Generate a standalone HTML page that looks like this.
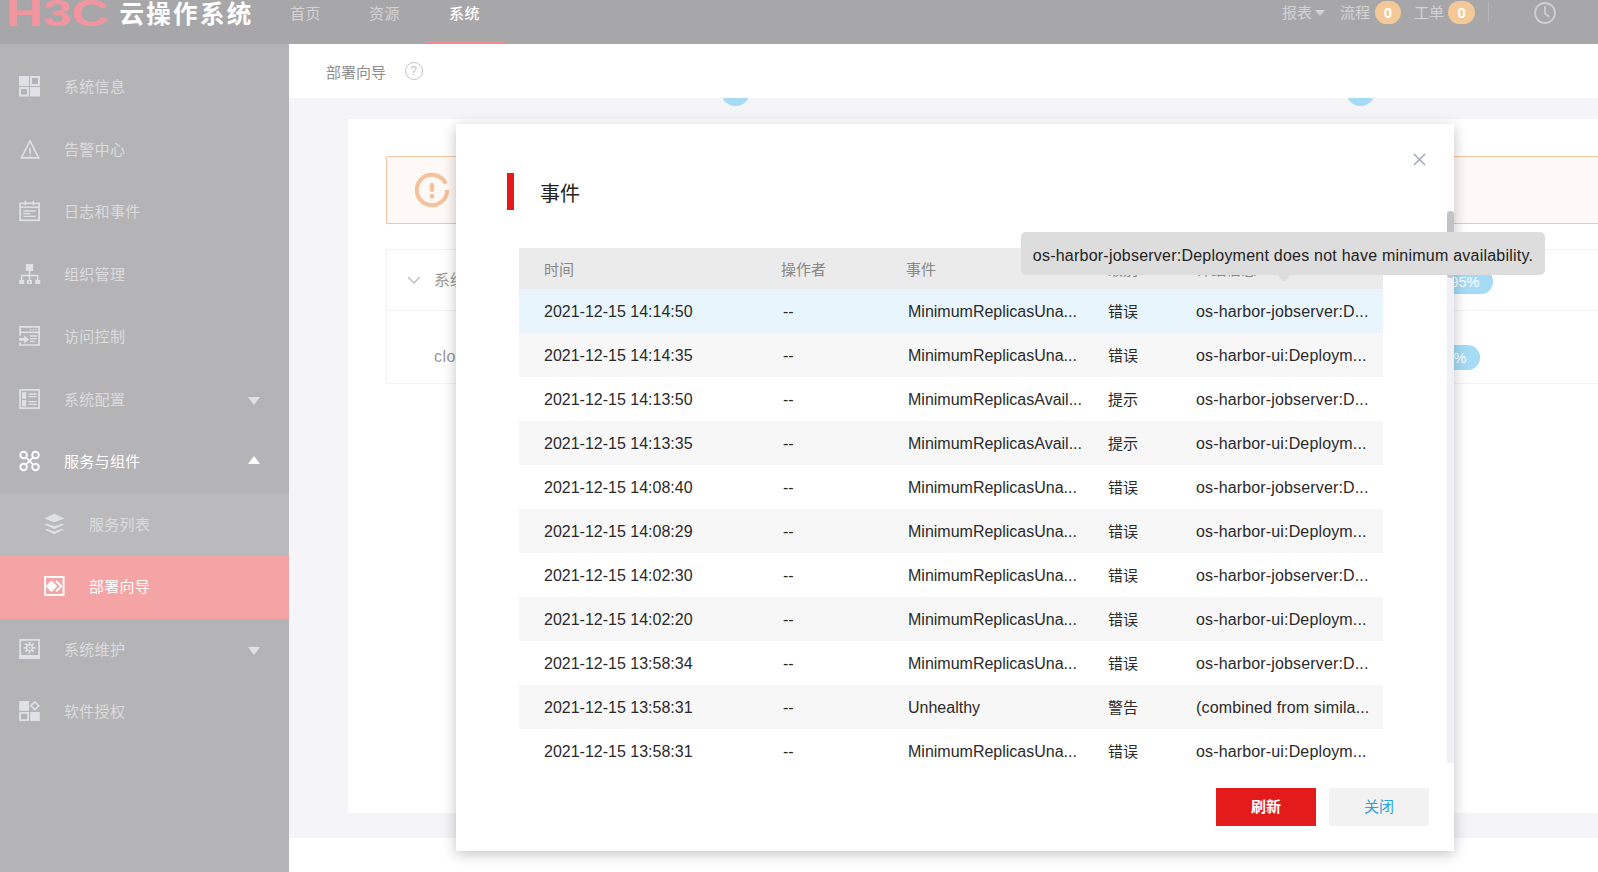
<!DOCTYPE html>
<html lang="zh-CN">
<head>
<meta charset="utf-8">
<title>云操作系统 - 部署向导</title>
<style>
*{box-sizing:border-box;margin:0;padding:0}
html,body{width:1598px;height:872px;overflow:hidden;background:#fff}
body{font-family:"Liberation Sans","Noto Sans CJK SC",sans-serif;font-size:15px;color:#222;position:relative}
.abs{position:absolute}

/* ---------- top header ---------- */
#hdr{position:absolute;left:0;top:0;width:1598px;height:44px;background:#a7a7a9;z-index:5}
#hdr .logo{position:absolute;left:0;top:0;width:112px;height:30px}
#hdr .brand{position:absolute;left:119.500px;top:-4px;font-size:24.500px;line-height:38px;font-weight:700;color:#fff;letter-spacing:2.300px;white-space:nowrap}
#hdr .nav{position:absolute;top:1.500px;letter-spacing:.5px;height:43px;font-size:15px;line-height:24px;color:#d3d3d4;white-space:nowrap}
#hdr .nav.on{color:#fff;font-weight:500}
#hdr .ul{position:absolute;left:425px;top:41px;width:80px;height:2px;background:#f08c8e}
#hdr .rt{position:absolute;top:1px;font-size:15px;line-height:24px;color:#d3d3d4;white-space:nowrap}
#hdr .bdg{position:absolute;top:1px;height:23px;width:26.500px;border-radius:11.500px;background:#f4c997;color:#fff;font-size:15px;font-weight:700;line-height:23px;text-align:center}
#hdr .sep{position:absolute;left:1488px;top:2px;width:1px;height:20px;background:#b7b7b9}

/* ---------- sidebar ---------- */
#side{position:absolute;left:0;top:44px;width:289px;height:828px;background:#b4b4b6;z-index:4}
#side .it{position:absolute;left:0;width:289px;height:62.5px;color:#dcdcde;font-size:15px;line-height:62.5px;white-space:nowrap}
#side .it .tx{position:absolute;left:64px;top:1px;letter-spacing:.3px}
#side .it.sub .tx{left:89px}
#side .ico{position:absolute;left:0;top:0;width:289px;height:828px}
#side .it.w{color:#fff}
#side .subbg{position:absolute;left:0;top:450px;width:289px;height:62px;background:#bababc}
#side .act{position:absolute;left:0;top:512px;width:289px;height:63px;background:#f5a4a5}
#side .tri{position:absolute;left:247.600px;width:0;height:0;border-left:6.800px solid transparent;border-right:6.800px solid transparent}
#side .tri.dn{border-top:8px solid #dfe1e6}
#side .tri.up{border-bottom:8px solid #fff}

/* ---------- content ---------- */
#main{position:absolute;left:289px;top:44px;width:1309px;height:828px;background:#fff;z-index:1}
#crumb{position:absolute;left:0;top:0;width:1309px;height:54px;background:#fff;z-index:3}
#crumb .t{position:absolute;left:37px;top:17px;font-size:15px;line-height:24px;color:#8e8e8e}
#crumb .q{position:absolute;left:115.500px;top:18px;width:18px;height:18px;border:1px solid #c4c4c6;border-radius:50%;color:#c0c0c2;font-size:12px;line-height:16px;text-align:center}
#gray{position:absolute;left:0;top:54px;width:1309px;height:740px;background:#f5f5f8;z-index:1}
.dot{position:absolute;top:33px;width:29px;height:29px;border-radius:50%;background:#a5dbf5;z-index:2}
#card{position:absolute;left:59px;top:75px;width:1250px;height:694px;background:#fff;z-index:2}
#alert{position:absolute;left:38px;top:37px;width:1230px;height:68px;border:1px solid #f6c4a2;border-radius:1px;background:#fef9f6}
#alert svg{position:absolute;left:25.300px;top:12.700px;width:40px;height:40px}
#sect{position:absolute;left:38px;top:130px;width:1230px;height:135px;border:1px solid #f2f2f5;background:#fff}
#sect .ln{position:absolute;left:0;top:60px;width:1230px;height:1px;background:#f2f2f5}
#sect .t1{position:absolute;left:47px;top:18.500px;font-size:16px;line-height:24px;color:#999;white-space:nowrap}
#sect .t2{position:absolute;left:47px;top:94.500px;font-size:16px;line-height:24px;color:#999;white-space:nowrap;letter-spacing:.5px}
#sect svg{position:absolute;left:20px;top:25px;width:14px;height:10px}
.pill{position:absolute;height:24.600px;border-radius:12.300px;background:#a5dbf5;color:#fff;font-size:14.500px;line-height:26.500px;text-align:right;padding-right:13.600px}

/* ---------- modal ---------- */
#modal{position:absolute;left:456px;top:124px;width:998px;height:727px;background:#fff;z-index:10;box-shadow:0 3px 13px rgba(0,0,0,.24)}
#modal .bar{position:absolute;left:51px;top:49px;width:7px;height:37px;background:#e31b1b}
#modal .ttl{position:absolute;left:84px;top:53.500px;font-size:20px;line-height:32px;color:#222}
#modal .x{position:absolute;left:957px;top:29.300px;width:13px;height:13px}
#tbl{position:absolute;left:63px;top:124px;width:864px}
#tbl .r{position:relative;width:864px;height:44px;line-height:45.600px;font-size:16px;color:#2a2a2a;white-space:nowrap}
#tbl .r.h{height:41px;line-height:44.500px;background:#ebebeb;color:#888;font-size:15px}
#tbl .r.a{background:#e9f5fd}
#tbl .r.e{background:#f7f7f7}
#tbl .r span{position:absolute;top:0}
#tbl .c4{font-size:15px}
#tbl .c5{letter-spacing:.15px}
#tbl .c1{left:25px}#tbl .c2{left:264px}#tbl .c3{left:389px}#tbl .c4{left:589px}#tbl .c5{left:677px}
#tbl .r.h .c2{left:262px}#tbl .r.h .c3{left:387px}
#sbt{position:absolute;left:991px;top:87px;width:7px;height:552px;background:#f0f0f6}
#sbh{position:absolute;left:991px;top:87px;width:7px;height:66.500px;background:#c1c3c8;border-radius:3.500px}
.btn{position:absolute;top:664px;width:100px;height:38px;font-size:15px;line-height:38px;text-align:center}
#b1{left:760px;background:#e31b1b;color:#fff;font-weight:700}
#b2{left:873px;background:#f2f2f2;color:#2d9fe0}

/* ---------- tooltip ---------- */
#tip{position:absolute;left:1021px;top:232px;width:524px;height:42.500px;border-radius:5px;background:#dddddd;z-index:20;font-size:16px;line-height:47px;letter-spacing:.23px;color:#222;text-align:center;white-space:nowrap}
#tip i{position:absolute;left:255.500px;top:42.500px;width:0;height:0;border-left:7px solid transparent;border-right:7px solid transparent;border-top:7px solid #dddddd}
</style>
</head>
<body>

<!-- top header -->
<div id="hdr">
  <svg class="logo" viewBox="0 0 112 30"><text x="5.500" y="25.700" font-family="Liberation Sans, sans-serif" font-size="36.500" font-weight="700" fill="#f2959f" textLength="103" lengthAdjust="spacingAndGlyphs">H3C</text></svg>
  <div class="brand">云操作系统</div>
  <div class="nav" style="left:290px">首页</div>
  <div class="nav" style="left:369px">资源</div>
  <div class="nav on" style="left:449px">系统</div>
  <div class="ul"></div>
  <div class="rt" style="left:1282px">报表</div>
  <div class="abs" style="left:1315px;top:10px;width:0;height:0;border-left:5px solid transparent;border-right:5px solid transparent;border-top:6px solid #d3d3d4"></div>
  <div class="rt" style="left:1340px">流程</div>
  <div class="bdg" style="left:1374.700px">0</div>
  <div class="rt" style="left:1414px">工单</div>
  <div class="bdg" style="left:1448.300px">0</div>
  <div class="sep"></div>
  <svg class="abs" style="left:1533.400px;top:0.800px;width:24px;height:24px" viewBox="0 0 24 24" fill="none" stroke="#cfcfd1" stroke-width="1.8"><circle cx="12" cy="12" r="10"/><path d="M12 6v6.5l4 3" stroke-linecap="round"/></svg>
</div>

<!-- sidebar -->
<div id="side">
  <div class="subbg"></div>
  <div class="act"></div>
  <svg class="ico" viewBox="0 44 289 828" width="289" height="828">
    <g fill="#dfe1e6" stroke="none">
      <!-- system info: four tiles -->
      <rect x="19" y="76" width="10" height="10"/>
      <rect x="30" y="87" width="10" height="9.5"/>
      <path fill-rule="evenodd" d="M30 76h10v10h-10zM32 78v6h6v-6z"/>
      <path fill-rule="evenodd" d="M19 87h10v9.500h-10zM21 89v5.500h6v-5.500z"/>
      <!-- organisation -->
      <rect x="25.800" y="264" width="7.400" height="7"/>
      <rect x="19.200" y="280" width="5" height="4"/>
      <rect x="35.200" y="280" width="5" height="4"/>
      <path fill-rule="evenodd" d="M27 280h5v4h-5zM28.800 281.200v1.800h1.400v-1.800z"/>
      <!-- config blocks -->
      <rect x="22" y="392.200" width="4.200" height="6.600"/>
      <rect x="22" y="400" width="4.200" height="6.400"/>
      <!-- layers (sub item) -->
      <path d="M54.300 513.800L64.600 518.400L54.300 522.300L44.200 518.400z"/>
      <path d="M44.200 524.200L46.800 523.700L54.300 526.200L61.800 523.700L64.500 524.200L54.300 529.200z"/>
      <path d="M44.600 529.600L47.200 529.100L54.300 531.400L61.400 529.100L64.100 529.600L54.300 534.300z"/>
      <!-- maintenance bottom band -->
      <rect x="19.200" y="655" width="20.600" height="4"/>
      <circle cx="29.500" cy="647.800" r="1"/>
      <!-- licence tiles -->
      <rect x="19.200" y="701" width="9.800" height="9.800"/>
      <rect x="30.200" y="712" width="9.600" height="9"/>
      <path fill-rule="evenodd" d="M19.200 712h9.800v9h-9.800zM21 713.800v5.400h6.200v-5.400z"/>
    </g>
    <g fill="none" stroke="#dfe1e6" stroke-width="1.700">
      <!-- alarm triangle -->
      <path d="M30 140.900L38.700 157.900H21.300z" stroke-linejoin="miter" stroke-width="1.600"/>
      <path d="M30 147.800v6.200M30 155.200v1.300" stroke-width="1.500"/>
      <!-- log / calendar -->
      <rect x="20.100" y="203.300" width="19" height="17"/>
      <path d="M20 207.200h19.200" stroke-width="1.500"/>
      <path d="M25.400 200.800v4.400M33.400 200.800v4.400" stroke-width="1.600"/>
      <path d="M23.300 211h12.300M23.300 213.700h7.200M23.300 216.400h12.300" stroke-width="1.300"/>
      <!-- organisation lines -->
      <path d="M29.500 271v9M21.600 280v-4.500h16v4.500" stroke-width="1.500"/>
      <!-- access control -->
      <path d="M20.100 335.800v-9h19v18.200h-19v-2.600"/>
      <path d="M20 332.300h19.200" stroke-width="1.500"/>
      <path d="M29.800 329.600h1.300M32.700 329.600h1.300M35.400 329.600h1.300" stroke-width="1.100"/>
      <path d="M30 336h6.800M30 338.700h6.800M30 341.400h4.600" stroke-width="1.300"/>
      <!-- config frame -->
      <rect x="20.100" y="389.900" width="19" height="18.200"/>
      <path d="M28.500 394h8.200M28.500 396.600h8.200M28.500 401.700h8.200M28.500 404.400h8.200" stroke-width="1.300"/>
      <!-- maintenance frame + gear -->
      <rect x="20.100" y="639.900" width="19" height="18.200"/>
      <circle cx="29.500" cy="647.800" r="3" stroke-width="1.400"/>
      <path d="M32.90 647.80L35.40 647.80M31.90 650.20L33.67 651.97M29.50 651.20L29.50 653.70M27.10 650.20L25.33 651.97M26.10 647.80L23.60 647.80M27.10 645.40L25.33 643.63M29.50 644.40L29.50 641.90M31.90 645.40L33.67 643.63" stroke-width="1.700"/>
      <!-- licence diamond -->
      <path d="M34.800 701.900L38.700 705.800L34.800 709.700L30.900 705.800z" stroke-width="1.600"/>
    </g>
    <!-- access control arrow -->
    <path fill="#dfe1e6" d="M19 338h5.200v-2.800l5 4.200l-5 4.200v-2.800H19z"/>
    <!-- services & components (white, active group) -->
    <g fill="none" stroke="#fff" stroke-width="1.900">
      <circle cx="23.600" cy="455" r="3.300"/><circle cx="35.500" cy="455" r="3.300"/>
      <circle cx="23.600" cy="467" r="3.300"/><circle cx="35.500" cy="467" r="3.300"/>
      <path d="M26 457.400L33.100 464.600M33.100 457.400L26 464.600" stroke-width="1.700"/>
      <!-- deploy wizard frame -->
      <rect x="45.100" y="577" width="18.500" height="17.900"/>
      <path d="M56 581L61.300 586.200L56 591.400" stroke-width="2"/>
    </g>
    <path fill="#fff" d="M51.400 580.400L57.200 586.200L51.400 592L45.600 586.200z"/>
  </svg>
  <div class="it" style="top:11.25px"><span class="tx">系统信息</span></div>
  <div class="it" style="top:73.75px"><span class="tx">告警中心</span></div>
  <div class="it" style="top:136.25px"><span class="tx">日志和事件</span></div>
  <div class="it" style="top:198.75px"><span class="tx">组织管理</span></div>
  <div class="it" style="top:261.25px"><span class="tx">访问控制</span></div>
  <div class="it" style="top:323.75px"><span class="tx">系统配置</span></div>
  <div class="tri dn" style="top:352.800px"></div>
  <div class="it w" style="top:386.25px"><span class="tx">服务与组件</span></div>
  <div class="tri up" style="top:411.800px"></div>
  <div class="it sub" style="top:448.75px"><span class="tx">服务列表</span></div>
  <div class="it sub w" style="top:511.25px"><span class="tx">部署向导</span></div>
  <div class="it" style="top:573.75px"><span class="tx">系统维护</span></div>
  <div class="tri dn" style="top:602.800px"></div>
  <div class="it" style="top:636.25px"><span class="tx">软件授权</span></div>
</div>

<!-- main content -->
<div id="main">
  <div id="crumb"><div class="t">部署向导</div><div class="q">?</div></div>
  <div id="gray"></div>
  <div class="dot" style="left:431.5px"></div>
  <div class="dot" style="left:1056.5px"></div>
  <div id="card">
    <div id="alert"><svg viewBox="0 0 40 40" fill="none" stroke="#f5c09c" stroke-linecap="round"><path d="M35.200 20A15.200 15.200 0 1 1 33.780 13.580" stroke-width="4" stroke-linecap="butt"/><path d="M20 14.900v5.100" stroke-width="4.200"/><circle cx="20" cy="26.200" r="2.400" fill="#f5c09c" stroke="none"/></svg></div>
    <div id="sect">
      <div class="ln"></div>
      <svg viewBox="0 0 14 10" fill="none" stroke="#b0b0b4" stroke-width="1.100"><path d="M1.200 2.200L7 8L12.800 2.200"/></svg>
      <div class="t1">系统组件</div>
      <div class="t2">cloudos</div>
      <div class="pill" style="left:900px;top:19.400px;width:206px">95%</div>
      <div class="pill" style="left:900px;top:95.200px;width:193px">90%</div>
    </div>
  </div>
</div>

<!-- modal dialog -->
<div id="modal">
  <div class="bar"></div>
  <div class="ttl">事件</div>
  <svg class="x" viewBox="0 0 13 13" stroke="#9aa1b0" stroke-width="1.3" fill="none"><path d="M1 1l11 11M12 1L1 12"/></svg>
  <div id="tbl">
    <div class="r h"><span class="c1">时间</span><span class="c2">操作者</span><span class="c3">事件</span><span class="c4">级别</span><span class="c5">详细信息</span></div>
    <div class="r a"><span class="c1">2021-12-15 14:14:50</span><span class="c2">--</span><span class="c3">MinimumReplicasUna...</span><span class="c4">错误</span><span class="c5">os-harbor-jobserver:D...</span></div>
    <div class="r e"><span class="c1">2021-12-15 14:14:35</span><span class="c2">--</span><span class="c3">MinimumReplicasUna...</span><span class="c4">错误</span><span class="c5">os-harbor-ui:Deploym...</span></div>
    <div class="r"><span class="c1">2021-12-15 14:13:50</span><span class="c2">--</span><span class="c3">MinimumReplicasAvail...</span><span class="c4">提示</span><span class="c5">os-harbor-jobserver:D...</span></div>
    <div class="r e"><span class="c1">2021-12-15 14:13:35</span><span class="c2">--</span><span class="c3">MinimumReplicasAvail...</span><span class="c4">提示</span><span class="c5">os-harbor-ui:Deploym...</span></div>
    <div class="r"><span class="c1">2021-12-15 14:08:40</span><span class="c2">--</span><span class="c3">MinimumReplicasUna...</span><span class="c4">错误</span><span class="c5">os-harbor-jobserver:D...</span></div>
    <div class="r e"><span class="c1">2021-12-15 14:08:29</span><span class="c2">--</span><span class="c3">MinimumReplicasUna...</span><span class="c4">错误</span><span class="c5">os-harbor-ui:Deploym...</span></div>
    <div class="r"><span class="c1">2021-12-15 14:02:30</span><span class="c2">--</span><span class="c3">MinimumReplicasUna...</span><span class="c4">错误</span><span class="c5">os-harbor-jobserver:D...</span></div>
    <div class="r e"><span class="c1">2021-12-15 14:02:20</span><span class="c2">--</span><span class="c3">MinimumReplicasUna...</span><span class="c4">错误</span><span class="c5">os-harbor-ui:Deploym...</span></div>
    <div class="r"><span class="c1">2021-12-15 13:58:34</span><span class="c2">--</span><span class="c3">MinimumReplicasUna...</span><span class="c4">错误</span><span class="c5">os-harbor-jobserver:D...</span></div>
    <div class="r e"><span class="c1">2021-12-15 13:58:31</span><span class="c2">--</span><span class="c3">Unhealthy</span><span class="c4">警告</span><span class="c5">(combined from simila...</span></div>
    <div class="r"><span class="c1">2021-12-15 13:58:31</span><span class="c2">--</span><span class="c3">MinimumReplicasUna...</span><span class="c4">错误</span><span class="c5">os-harbor-ui:Deploym...</span></div>
  </div>
  <div id="sbt"></div>
  <div id="sbh"></div>
  <div class="btn" id="b1">刷新</div>
  <div class="btn" id="b2">关闭</div>
</div>

<!-- tooltip -->
<div id="tip">os-harbor-jobserver:Deployment does not have minimum availability.<i></i></div>

</body>
</html>
